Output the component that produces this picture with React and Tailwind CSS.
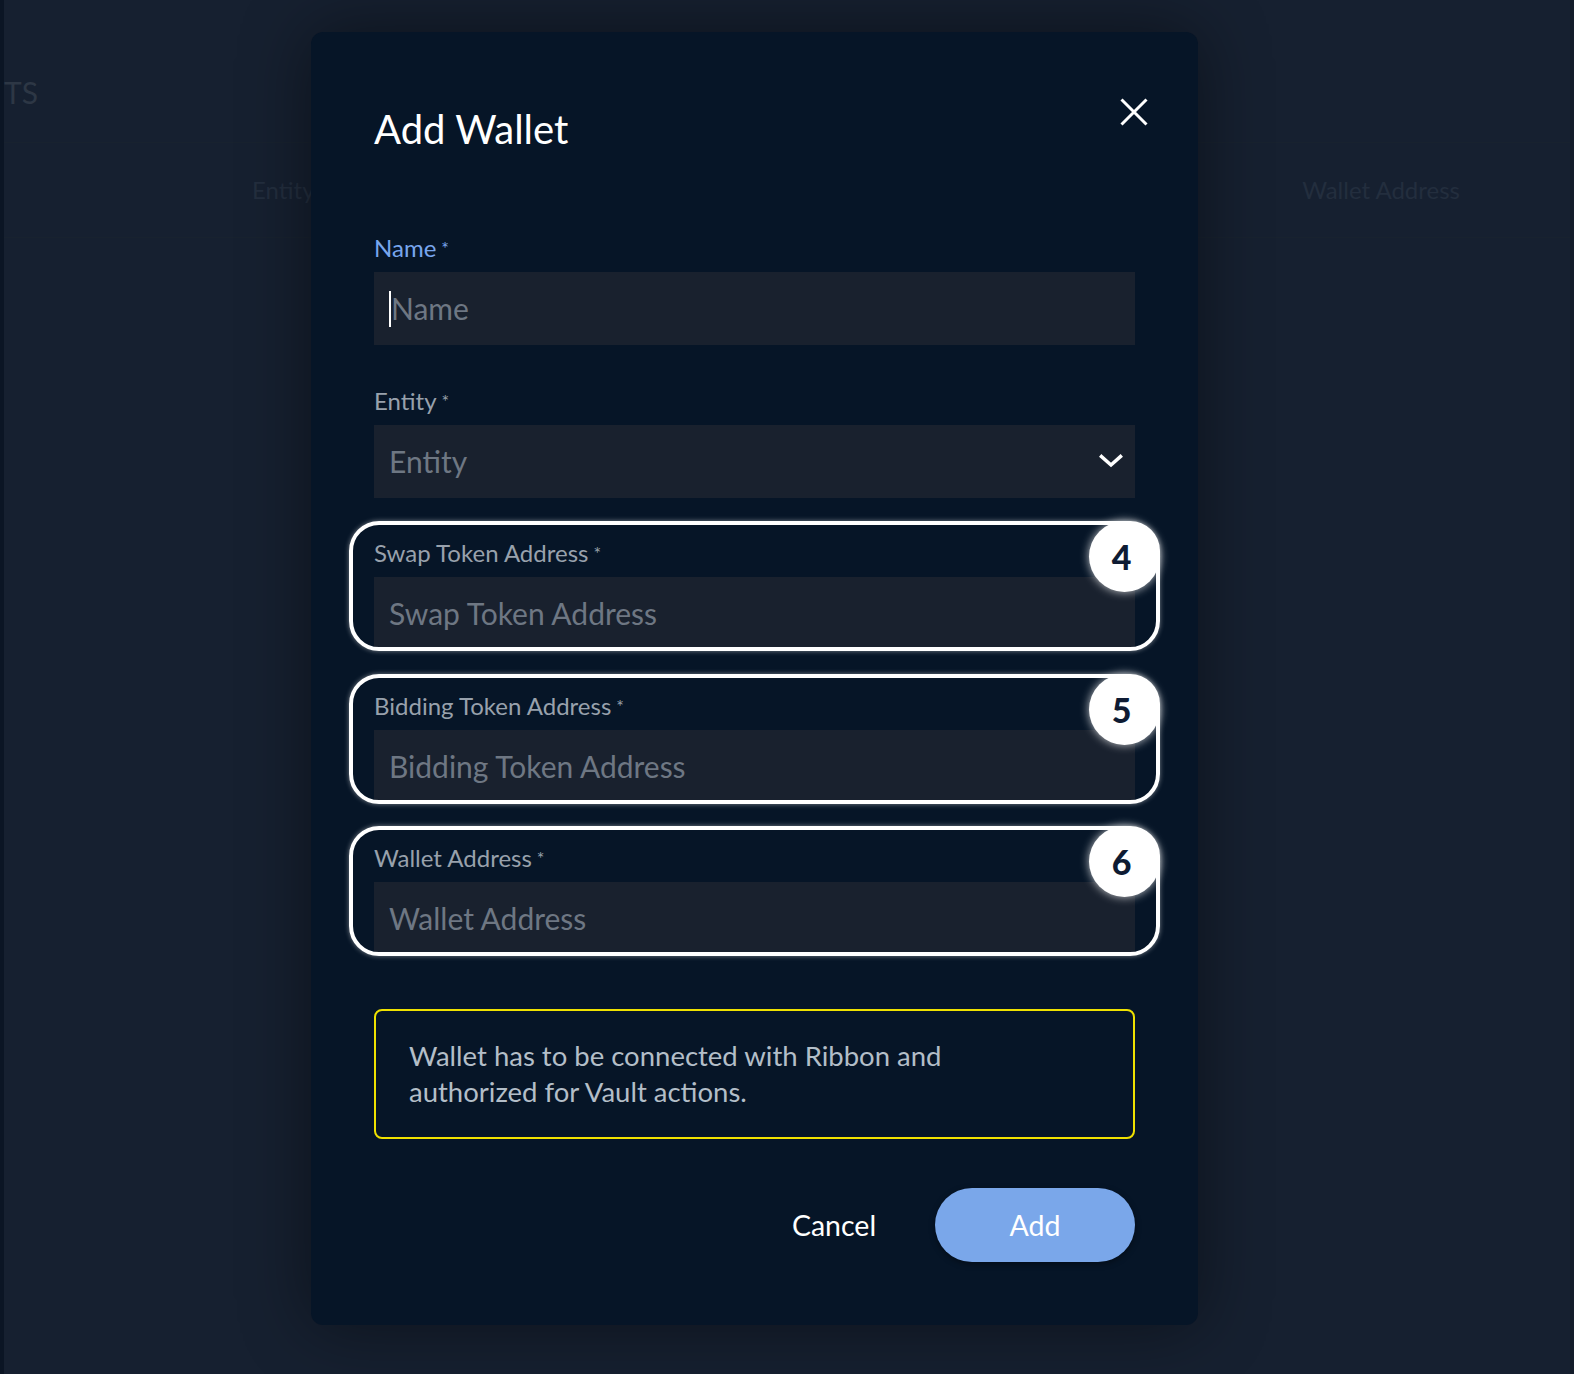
import React from "react";

const Chevron = () => (
  <svg width="24" height="14" viewBox="0 0 24 14" fill="none">
    <path d="M2.5 2.5L12 11L21.5 2.5" stroke="white" strokeWidth="3.5" strokeLinecap="square" />
  </svg>
);

const Field = ({ label, placeholder, active, badge, select, caret }) => (
  <div className="relative">
    <div
      className={`h-[26px] mb-[11px] text-[24px] leading-[26px] ${
        active ? "text-[#78a6ee]" : "text-[#98a1ac]"
      }`}
    >
      {label}
      <span className="ml-[5px] text-[18px] align-top">*</span>
    </div>
    <div className="h-[73px] bg-[#19212e] flex items-center pl-[15px] pr-[12px] text-[30px] text-[#6e7783]">
      {caret && <span className="w-[2px] h-[36px] bg-white" />}
      <span className="flex-1">{placeholder}</span>
      {select && <Chevron />}
    </div>
    {badge && (
      <>
        <div className="absolute -top-[19px] -left-[25px] -right-[25px] -bottom-[1px] rounded-[30px] border-4 border-white shadow-[0_0_5px_rgba(255,255,255,0.45)] pointer-events-none" />
        <div className="absolute -top-[19px] -right-[25px] w-[71px] h-[71px] pr-[6px] rounded-full bg-white shadow-[0_0_10px_rgba(255,255,255,0.75)] flex items-center justify-center text-[34px] font-black text-[#0e1b33]">
          {badge}
        </div>
      </>
    )}
  </div>
);

export default function App() {
  return (
    <div className="relative w-full h-[1374px] overflow-hidden bg-[#162030] font-[Lato,sans-serif]">
      {/* page behind the dialog */}
      <div className="flex h-full">
        <div className="w-[4px] bg-[#0b1524]" />
        <div className="flex-1 flex flex-col">
          <div className="h-[142px] pt-[74px] text-[30px] leading-[36px] text-[#2d3745]">TS</div>
          <div className="h-[96px] border-y border-[#18222f] flex items-center text-[24px] text-[#232e3e]">
            <span className="ml-[248px]">Entity</span>
            <span className="ml-auto mr-[110px]">Wallet Address</span>
          </div>
        </div>
        <div className="w-[4px] bg-[#131c2a]" />
      </div>

      {/* dialog */}
      <div className="absolute left-[311px] top-[32px] w-[887px] rounded-[12px] bg-[#061527] pt-[73px] px-[63px] pb-[63px] shadow-[0_0_70px_rgba(0,0,0,0.45)]">
        <button className="absolute top-[66px] right-[50px]">
          <svg width="28" height="28" viewBox="0 0 28 28" fill="none">
            <path d="M1.5 1.5L26.5 26.5M26.5 1.5L1.5 26.5" stroke="white" strokeWidth="3" />
          </svg>
        </button>

        <h2 className="h-[48px] mb-[82px] text-[40px] leading-[48px] text-white">Add Wallet</h2>

        <div className="flex flex-col gap-[42.5px]">
          <Field label="Name" placeholder="Name" active caret />
          <Field label="Entity" placeholder="Entity" select />
          <Field label="Swap Token Address" placeholder="Swap Token Address" badge="4" />
          <Field label="Bidding Token Address" placeholder="Bidding Token Address" badge="5" />
          <Field label="Wallet Address" placeholder="Wallet Address" badge="6" />
        </div>

        <div className="mt-[54px] h-[130px] rounded-[8px] border-2 border-[#efe100] px-[33px] flex items-center text-[27.5px] leading-[36px] text-[#b3bec8]">
          <p>
            Wallet has to be connected with Ribbon and
            <br />
            authorized for Vault actions.
          </p>
        </div>

        <div className="mt-[49px] flex justify-end items-center gap-[41px]">
          <button className="w-[120px] h-[74px] text-[28.5px] text-white">Cancel</button>
          <button className="w-[200px] h-[74px] rounded-full bg-[#7aa7ea] text-[28.5px] text-white shadow-[0_2px_6px_rgba(0,0,0,0.4)]">
            Add
          </button>
        </div>
      </div>
    </div>
  );
}
